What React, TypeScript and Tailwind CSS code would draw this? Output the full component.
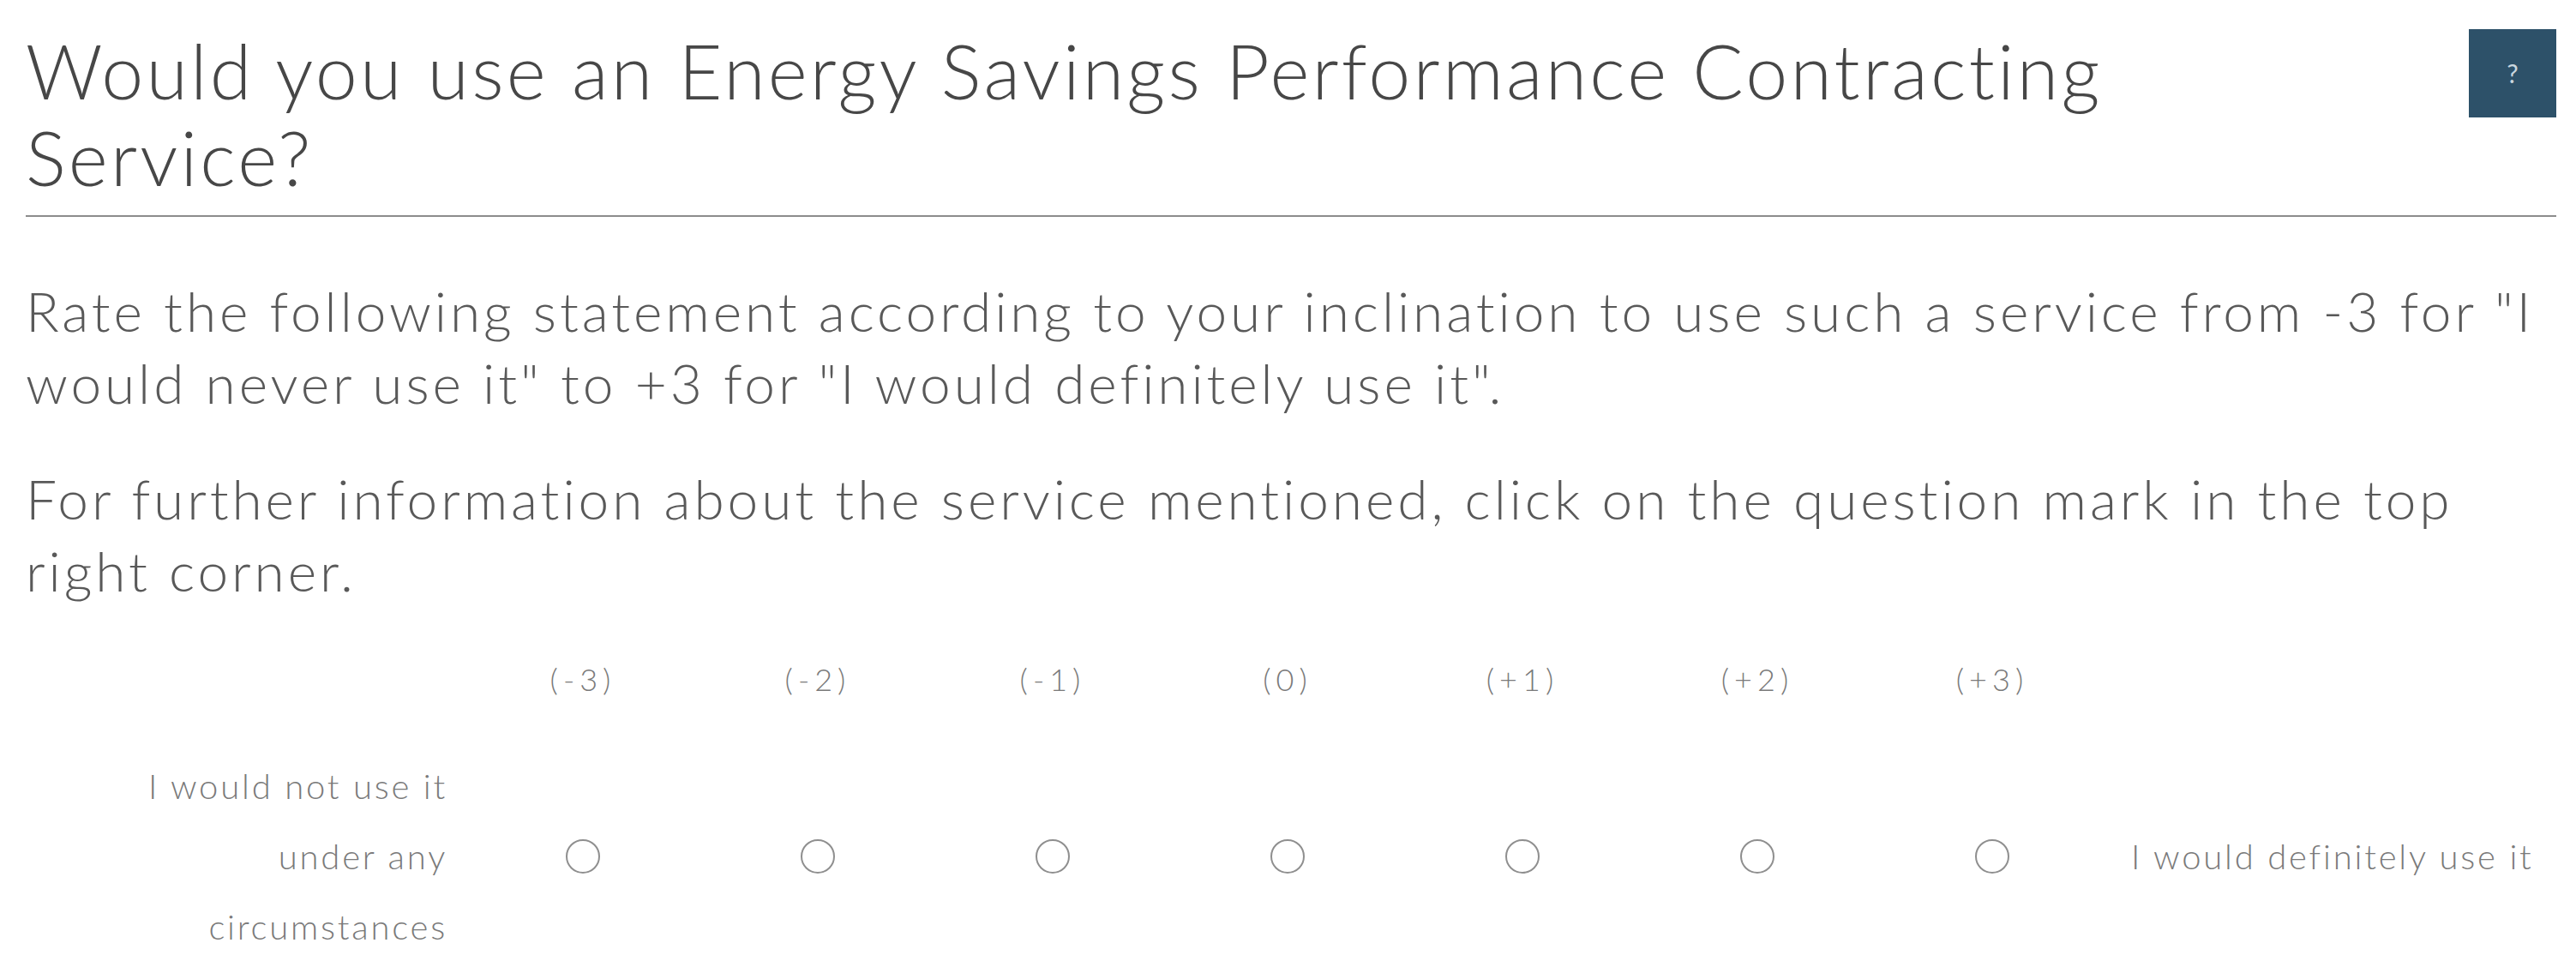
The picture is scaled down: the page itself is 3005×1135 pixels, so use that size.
import React from "react";

const cols = ["(-3)", "(-2)", "(-1)", "(0)", "(+1)", "(+2)", "(+3)"];

export default function App() {
  return (
    <div
      className="min-h-[1135px] w-[3005px] bg-white pl-[30px] pr-[23px]"
      style={{ fontFamily: "Lato, 'Open Sans', sans-serif" }}
    >
      {/* Header */}
      <div className="flex items-start justify-between border-b-2 border-[#8c8c8c] pt-[32px] pb-[17px]">
        <h1 className="w-[2600px] text-[88px] leading-[101px] font-light tracking-[3.2px] text-[#474747]">
          Would you use an Energy Savings Performance Contracting Service?
        </h1>
        <button className="mt-[2px] flex h-[103px] w-[102px] items-center justify-center bg-[#2d5169] text-[30px] text-[#c9d6df]">
          ?
        </button>
      </div>

      {/* Description */}
      <p className="mt-[68px] text-[64px] leading-[84px] font-light tracking-[3.9px] text-[#595959]">
        Rate the following statement according to your inclination to use such a service from -3 for "I would never use it" to +3 for "I would definitely use it".
      </p>
      <p className="mt-[51px] text-[64px] leading-[84px] font-light tracking-[3.9px] text-[#595959]">
        For further information about the service mentioned, click on the question mark in the top right corner.
      </p>

      {/* Scale header */}
      <div className="mt-[60px] flex items-center">
        <div className="w-[492px]" />
        <div className="ml-[21px] flex">
          {cols.map((c) => (
            <div key={c} className="flex w-[274px] justify-center text-[36px] leading-[48px] font-light tracking-[6px] text-[#7a7a7a]">
              {c}
            </div>
          ))}
        </div>
      </div>

      {/* Scale row */}
      <div className="mt-[60px] flex items-center">
        <div className="flex w-[492px] justify-end">
          <div className="w-[380px] text-right text-[40px] leading-[82px] font-light tracking-[2.8px] text-[#7a7a7a]">
            I would not use it under any circumstances
          </div>
        </div>
        <div className="ml-[21px] flex">
          {cols.map((c) => (
            <div key={c} className="flex w-[274px] justify-center">
              <span className="block h-[40px] w-[40px] rounded-full border-2 border-[#8f8f8f] bg-white" />
            </div>
          ))}
        </div>
        <div className="ml-[25px] text-[40px] leading-[80px] font-light tracking-[2.8px] text-[#7a7a7a]">
          I would definitely use it
        </div>
      </div>
    </div>
  );
}
